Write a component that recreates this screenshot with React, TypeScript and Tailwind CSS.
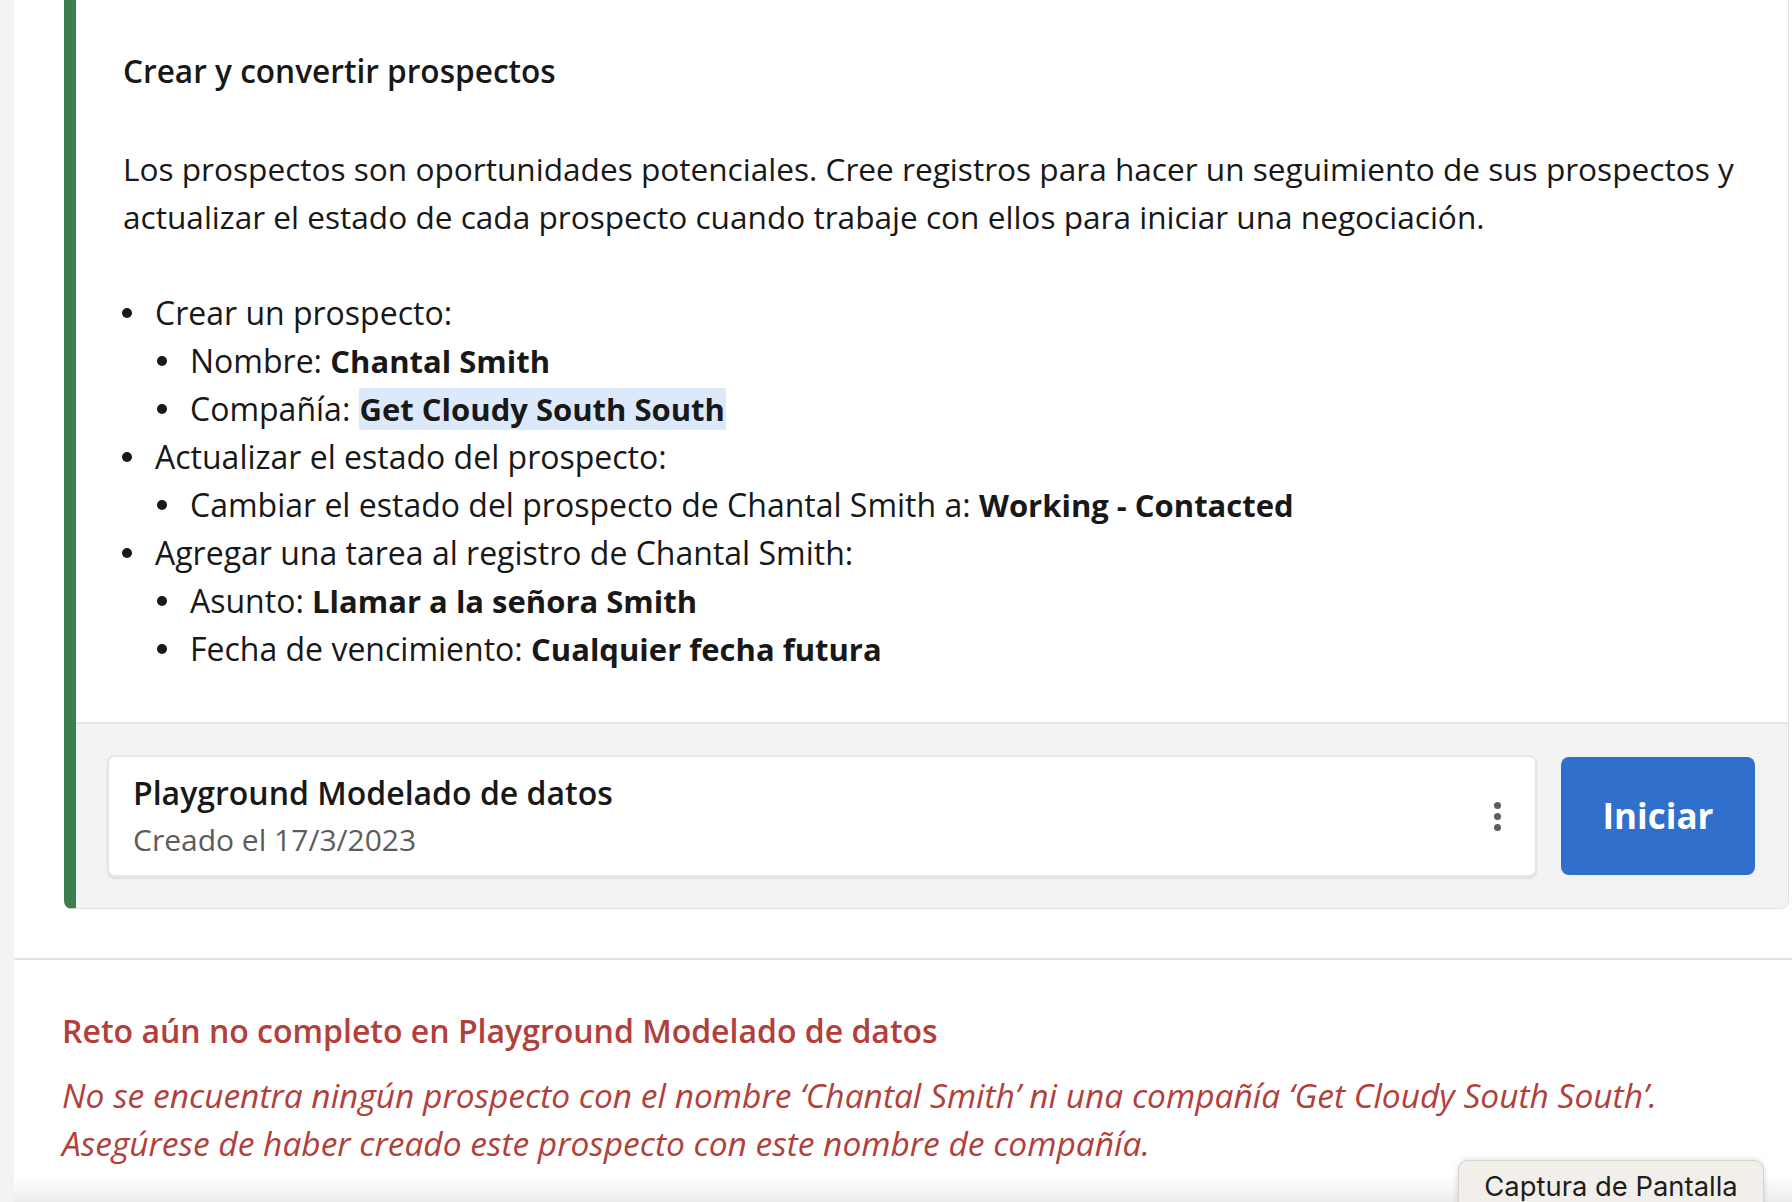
const font = "font-['Open_Sans',sans-serif]";

const tareas = [
  { texto: 'Crear un prospecto:', sub: [
    { label: 'Nombre:', valor: 'Chantal Smith' },
    { label: 'Compañía:', valor: 'Get Cloudy South South', marcado: true },
  ] },
  { texto: 'Actualizar el estado del prospecto:', sub: [
    { label: 'Cambiar el estado del prospecto de Chantal Smith a:', valor: 'Working - Contacted' },
  ] },
  { texto: 'Agregar una tarea al registro de Chantal Smith:', sub: [
    { label: 'Asunto:', valor: 'Llamar a la señora Smith' },
    { label: 'Fecha de vencimiento:', valor: 'Cualquier fecha futura' },
  ] },
];

function Bullet({ children, nested }: { children: React.ReactNode; nested?: boolean }) {
  return (
    <li className={`flex items-center h-[48px] ${nested ? 'pl-[36px]' : 'pl-[1px]'}`}>
      <span className="w-[10px] h-[10px] rounded-full bg-[#181818] shrink-0" />
      <span className="ml-[23px] whitespace-nowrap">{children}</span>
    </li>
  );
}

export default function App() {
  return (
    <div className={`relative w-[1792px] h-[1202px] overflow-hidden bg-white flex ${font} text-[#181818]`}>
      <div className="w-[14px] shrink-0 bg-[#f3f3f3]" />

      <main className="flex-1 min-w-0">
        {/* Reto */}
        <div className="pl-[50px] pr-[3px]">
          <section className="-mt-[12px] rounded-[8px] border border-[#e0e0e0] border-l-[12px] border-l-[#3a7f4f] overflow-hidden">
            <div className="pl-[47px] pr-[30px] pt-[61px] pb-[49px] bg-white">
              <h2 className="text-[31.6px] leading-[42px] font-semibold">Crear y convertir prospectos</h2>
              <p className="mt-[53px] text-[31.6px] leading-[48px] whitespace-nowrap">
                Los prospectos son oportunidades potenciales. Cree registros para hacer un seguimiento de sus prospectos y
                <br />
                actualizar el estado de cada prospecto cuando trabaje con ellos para iniciar una negociación.
              </p>
              <ul className="mt-[48px] text-[32px] -ml-[2px]">
                {tareas.map((t) => (
                  <div key={t.texto}>
                    <Bullet>{t.texto}</Bullet>
                    {t.sub.map((s) => (
                      <Bullet nested key={s.label}>
                        {s.label}{' '}
                        <b className={`font-bold text-[31px] ${s.marcado ? 'bg-[#dbe9fb] px-[1px]' : ''}`}>{s.valor}</b>
                      </Bullet>
                    ))}
                  </div>
                ))}
              </ul>
            </div>

            <div className="border-t-2 border-[#e5e5e5] bg-[#f3f3f3] pl-[31px] pr-[33px] pt-[31px] pb-[31px] flex items-center gap-[24px]">
              <div className="flex-1 h-[122px] rounded-[8px] bg-white border-2 border-[#e6e6e6] shadow-[0_2px_2px_rgba(0,0,0,0.08)] flex items-center pl-[24px] pr-[34px]">
                <div className="flex-1">
                  <div className="text-[32px] leading-[38px] font-semibold">Playground Modelado de datos</div>
                  <div className="text-[30px] leading-[36px] text-[#5c5c5c] mt-[10px]">Creado el 17/3/2023</div>
                </div>
                <div className="flex flex-col gap-[4px]">
                  <span className="w-[7px] h-[7px] rounded-full bg-[#5e5e5e]" />
                  <span className="w-[7px] h-[7px] rounded-full bg-[#5e5e5e]" />
                  <span className="w-[7px] h-[7px] rounded-full bg-[#5e5e5e]" />
                </div>
              </div>
              <button className="w-[194px] h-[118px] rounded-[8px] bg-[#3070cc] text-white text-[35px] font-bold">Iniciar</button>
            </div>
          </section>
        </div>

        <div className="mt-[49px] h-[2px] bg-[#e2e2e2]" />

        {/* Resultado */}
        <div className="pl-[48px] pt-[51px] text-[#b2403a]">
          <h3 className="text-[32px] leading-[40px] font-semibold">Reto aún no completo en Playground Modelado de datos</h3>
          <p className="mt-[20px] text-[33.5px] leading-[48px] italic whitespace-nowrap">
            No se encuentra ningún prospecto con el nombre ‘Chantal Smith’ ni una compañía ‘Get Cloudy South South’.
            <br />
            Asegúrese de haber creado este prospecto con este nombre de compañía.
          </p>
        </div>
      </main>

      <div className="pointer-events-none absolute left-[14px] right-0 bottom-0 h-[26px] bg-gradient-to-b from-white/0 to-[#ececec]" />

      <div className="absolute left-[1458px] top-[1160px] w-[306px] h-[60px] rounded-t-[10px] bg-[#f2efea] border border-[#d6d3ce] shadow-[0_0_6px_rgba(0,0,0,0.15)] pt-[8px] text-center font-['Inter',sans-serif] text-[27.4px] leading-[34px] text-[#1d1d1d]">
        Captura de Pantalla
      </div>
    </div>
  );
}
